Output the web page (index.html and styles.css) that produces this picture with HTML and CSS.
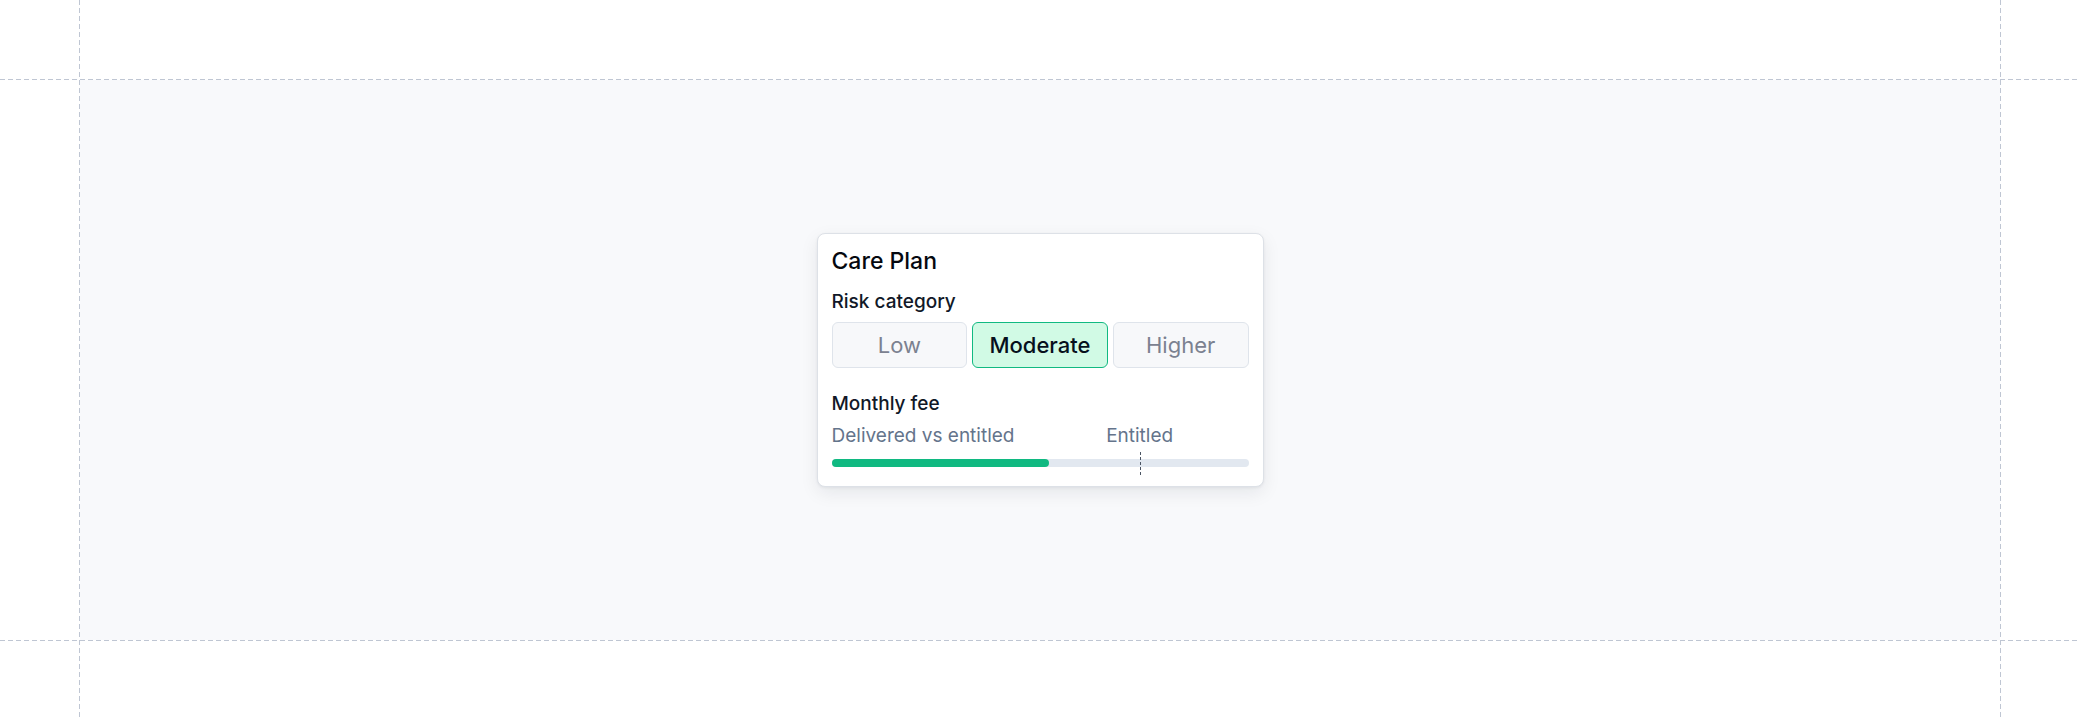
FILE: index.html
```html
<!DOCTYPE html>
<html lang="en">
<head>
<meta charset="utf-8">
<title>Care Plan</title>
<link rel="stylesheet" href="styles.css">
</head>
<body>
<div class="frame">
  <div class="guide guide-top"></div>
  <div class="guide guide-bottom"></div>
  <div class="guide guide-left"></div>
  <div class="guide guide-right"></div>
  <div class="panel">
    <section class="card">
      <h2 class="card-title">Care Plan</h2>
      <div class="field-label">Risk category</div>
      <div class="segmented">
        <button class="seg">Low</button>
        <button class="seg seg-active">Moderate</button>
        <button class="seg">Higher</button>
      </div>
      <div class="field-label fee-label">Monthly fee</div>
      <div class="meter-head">
        <span class="meter-caption">Delivered vs entitled</span>
        <span class="meter-mark-label" style="left: 73.9%">Entitled</span>
      </div>
      <div class="meter">
        <div class="meter-fill" style="width: 52.2%"></div>
        <div class="meter-mark" style="left: 73.9%"></div>
      </div>
    </section>
  </div>
</div>
</body>
</html>
```
FILE: styles.css
```css
* { box-sizing: border-box; }
html, body { margin: 0; padding: 0; background: #ffffff; }
body { font-family: Inter, "Noto Sans", sans-serif; color: #0f172a; }

.frame {
  position: relative;
  width: 2080px;
  height: 720px;
  padding: 80px;
}
.panel {
  width: 1920px;
  height: 560px;
  background: #f8f9fb;
  display: flex;
  align-items: center;
  justify-content: center;
}
.guide { position: absolute; }
.guide-top, .guide-bottom {
  left: 0; right: 0; height: 1px;
  background: repeating-linear-gradient(90deg, #bfc6d3 0 5px, transparent 5px 8px);
}
.guide-top { top: 79px; }
.guide-bottom { top: 640px; }
.guide-left, .guide-right {
  top: 0; bottom: 0; width: 1px;
  background: repeating-linear-gradient(180deg, #bfc6d3 0 5px, transparent 5px 8px);
}
.guide-left { left: 79px; }
.guide-right { left: 2000px; }

.card {
  width: 447px;
  padding: 14px;
  background: #ffffff;
  border: 1px solid #dde1e7;
  border-radius: 8px;
  box-shadow: 0 6px 18px rgba(15, 23, 42, 0.08), 0 1px 3px rgba(15, 23, 42, 0.06);
}
.card-title {
  margin: 0 0 17px;
  font-size: 23px;
  line-height: 26px;
  font-weight: 450;
  color: #05080f;
}
.field-label {
  font-size: 19px;
  line-height: 22px;
  font-weight: 450;
  color: #111827;
}
.segmented {
  display: grid;
  grid-template-columns: repeat(3, 1fr);
  gap: 5px;
  margin-top: 9px;
}
.seg {
  height: 46px;
  padding: 0;
  font-family: inherit;
  font-size: 22px;
  font-weight: 400;
  color: #7b8190;
  background: #f7f8fa;
  border: 1px solid #dfe4eb;
  border-radius: 6px;
}
.seg-active {
  color: #06101c;
  font-weight: 500;
  background: #d1fae5;
  border-color: #10b981;
}
.fee-label { margin-top: 25px; }
.meter-head {
  position: relative;
  margin-top: 10px;
  font-size: 19px;
  line-height: 22px;
  color: #64748b;
}
.meter-mark-label {
  position: absolute;
  top: 0;
  transform: translateX(-50%);
  white-space: nowrap;
}
.meter {
  position: relative;
  height: 8px;
  margin: 12px 0 5px;
  background: #e2e8f0;
  border-radius: 4px;
}
.meter-fill {
  height: 100%;
  background: #10b981;
  border-radius: 4px;
}
.meter-mark {
  position: absolute;
  top: -7px;
  height: 23px;
  width: 0;
  border-left: 1px dashed #4b5563;
}
```
